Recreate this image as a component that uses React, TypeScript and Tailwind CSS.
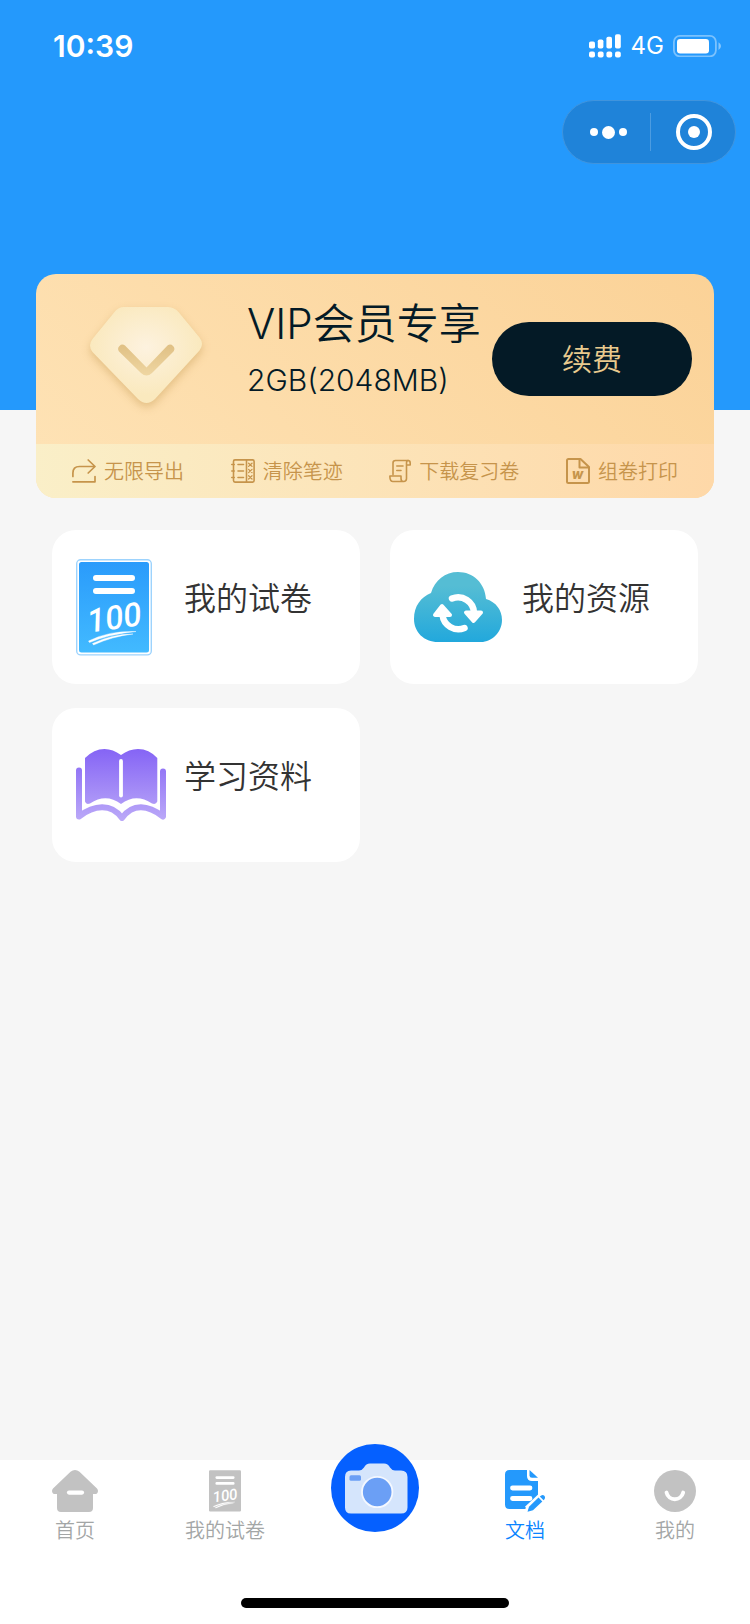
import React from 'react';

interface IconProps {
    className?: string;
}

interface PaperIconProps extends IconProps {
    plain?: boolean;
}

const SignalIcon = () => (
    <svg className="w-[33px] h-6" viewBox="0 0 33 24" fill="white" aria-hidden="true">
        <rect x="0" y="7.5" width="6" height="7" rx="1.8" />
        <rect x="8.8" y="5.5" width="5.6" height="9" rx="1.8" />
        <rect x="17.4" y="2.8" width="5.6" height="11.7" rx="1.8" />
        <rect x="26" y="0.3" width="5.8" height="14.2" rx="1.8" />
        <rect x="0" y="17.4" width="6" height="6" rx="2" />
        <rect x="8.8" y="17.4" width="5.8" height="6" rx="2" />
        <rect x="17.4" y="17.4" width="5.8" height="6" rx="2" />
        <rect x="26" y="17.4" width="5.8" height="6" rx="2" />
    </svg>
);

const BatteryIcon = () => (
    <svg className="w-12 h-[22px]" viewBox="0 0 48 22" aria-hidden="true">
        <rect x="0.9" y="0.9" width="42" height="20.4" rx="6" fill="none" stroke="white" strokeOpacity="0.4" strokeWidth="1.8" />
        <rect x="4" y="4" width="32" height="14.4" rx="3.2" fill="white" />
        <path d="M45.5 7.2q2.5 1.3 2.5 3.9t-2.5 3.9z" fill="white" fillOpacity="0.45" />
    </svg>
);

const DiamondIcon = () => (
    <svg className="w-28 h-[97px] overflow-visible drop-shadow-[0_4px_4px_rgba(190,145,70,0.4)]" viewBox="0 0 112 97" aria-hidden="true">
        <defs>
            <radialGradient id="gem" cx="0.5" cy="0.42" r="0.5">
                <stop offset="0" stopColor="#fdf2df" />
                <stop offset="1" stopColor="#fae9be" />
            </radialGradient>
            <linearGradient id="gemMark" x1="0" y1="0" x2="0" y2="1">
                <stop offset="0" stopColor="#e0c084" />
                <stop offset="1" stopColor="#efd6a2" />
            </linearGradient>
        </defs>
        <path
            d="M34 0H77Q84 0 88.500 5L109.500 30.500Q114.500 37 109.500 43.500L65 92Q56.500 100 48 92L2.500 45Q-2.500 38.500 2.500 32L24.500 5Q28.500 0 34 0Z"
            fill="url(#gem)"
        />
        <path d="M35 38.500L56.500 60.500L77.500 38.500A4.300 4.300 0 0 1 83.500 44.500L62 66Q56.500 71 51 66L29 44.500A4.300 4.300 0 0 1 35 38.500Z" fill="url(#gemMark)" />
    </svg>
);

const ExportIcon = () => (
    <svg className="w-6 h-6" viewBox="0 0 24 24" fill="none" stroke="#c6944b" strokeWidth="1.7" strokeLinecap="round" strokeLinejoin="round" aria-hidden="true">
        <path d="M0.900 17.500V14Q0.900 7.500 7.500 7.500H22.500M16.200 1L23 7.500L16.200 14M0.900 22.800H23V17.500" />
    </svg>
);

const NotebookIcon = () => (
    <svg className="w-6 h-6" viewBox="0 0 24 24" fill="none" stroke="#c6944b" strokeWidth="1.6" strokeLinecap="round" strokeLinejoin="round" aria-hidden="true">
        <rect x="2.500" y="0.900" width="20.600" height="22.200" rx="1.500" />
        <path d="M15.500 1V23M0.800 5.500H3.200M0.800 12H3.200M0.800 18.500H3.200M7 5.500H12.500M7 12H12.500M7 18.500H12.500" />
        <path d="M17.600 4.200L21 7.400M21 4.200L17.600 7.400M17.600 10.400L21 13.600M21 10.400L17.600 13.600M17.600 16.800L21 20M21 16.800L17.600 20" strokeWidth="1.300" />
    </svg>
);

const ScrollIcon = () => (
    <svg className="w-[22px] h-6" viewBox="0 0 22 24" fill="none" stroke="#c6944b" strokeWidth="1.6" strokeLinecap="round" strokeLinejoin="round" aria-hidden="true">
        <path d="M4 15.500V4Q4 1.500 6.500 1.500H19Q21.200 1.500 21.200 4V6H17.500V4Q17.500 1.500 19.300 1.500M17.500 6V19.500Q17.500 22.500 14.500 22.500H4Q1 22.500 0.900 18V17H12V19.500Q12 22.500 14.500 22.500M7.800 7H14M7.800 11.500H12" />
    </svg>
);

const WordIcon = () => (
    <svg className="w-6 h-[26px]" viewBox="0 0 24 26" fill="none" stroke="#c6944b" strokeWidth="2" strokeLinejoin="round" aria-hidden="true">
        <path d="M1 2.500Q1 1 2.500 1H14.500L23 9V23.500Q23 25 21.500 25H2.500Q1 25 1 23.500Z" />
        <path d="M13.500 1.500V9.500H22.500" />
        <text x="11.500" y="20.500" textAnchor="middle" fontFamily="Inter, sans-serif" fontSize="13" fontWeight="800" fontStyle="italic" fill="#c6944b" stroke="none">w</text>
    </svg>
);

const PaperIcon = ({ className, plain }: PaperIconProps) => (
    <svg className={className} viewBox={plain ? '3 3 70 91' : '0 0 76 97'} aria-hidden="true">
        <defs>
            <linearGradient id="paper" x1="0" y1="0" x2="0" y2="1">
                <stop offset="0" stopColor="#2a9bfb" />
                <stop offset="1" stopColor="#42baff" />
            </linearGradient>
        </defs>
        {!plain && <rect x="0.700" y="0.700" width="74.600" height="95.200" rx="4" fill="white" stroke="#9dd3fd" strokeWidth="1.400" />}
        <rect x="3" y="3" width="70" height="90.500" rx="2.500" fill={plain ? '#c2c2c2' : 'url(#paper)'} />
        <path d="M20 19H56M20 32H56" stroke="white" strokeWidth="6" strokeLinecap="round" />
        <text
            x="38"
            y="70"
            textAnchor="middle"
            transform="rotate(-8 38 58)"
            fontFamily="Roboto, sans-serif"
            fontSize="33"
            fontWeight="500"
            fontStyle="italic"
            fill="white"
        >
            100
        </text>
        <path d="M12.500 82Q33 71.500 60 72.500Q34 75 13.500 83.500ZM16.500 84.500Q36 75 57 75Q36 77.500 17.500 86Z" fill="white" stroke="white" strokeWidth="0.400" />
    </svg>
);

const CloudIcon = () => (
    <svg className="w-[88px] h-[70px]" viewBox="0 0 88 70" aria-hidden="true">
        <defs>
            <linearGradient id="cloud" x1="0" y1="0" x2="0" y2="1">
                <stop offset="0.200" stopColor="#55bdd4" />
                <stop offset="1" stopColor="#22a8dc" />
            </linearGradient>
        </defs>
        <path d="M24 70C10 70 0 60 0 47C0 34 7 25 17 21C21 8 31 0 44 0C59 0 71 11 72 27C82 30 88 38 88 48C88 60 78 70 67 70Z" fill="url(#cloud)" />
        <path d="M38 26.500A16 16 0 0 1 60 41M28.500 43A16 16 0 0 0 50.500 56" fill="none" stroke="white" strokeWidth="6.500" strokeLinecap="round" />
        <path d="M52 40.500H67L59.500 49ZM21 43H36L28 34Z" fill="white" stroke="white" strokeWidth="4" strokeLinejoin="round" />
    </svg>
);

const BookIcon = () => (
    <svg className="w-[90px] h-[72px]" viewBox="0 0 90 72" aria-hidden="true">
        <defs>
            <linearGradient id="book" gradientUnits="userSpaceOnUse" x1="0" y1="0" x2="0" y2="72">
                <stop offset="0" stopColor="#8564f5" />
                <stop offset="1" stopColor="#bba9f8" />
            </linearGradient>
        </defs>
        <path d="M9 9Q18 0 28.500 0Q37 0 45 6Q53 0 62 0Q73 0 81.300 9V52.500Q80 56 76 54.500Q60 44 45 55Q30 44 14 54.500Q10 56 9 52.500Z" fill="url(#book)" />
        <path d="M45 12V46.500" stroke="white" strokeWidth="3.800" strokeLinecap="round" />
        <path d="M3 21.500V67.500C18 56 35 54 46 69C57 54 72 56 87 67.500V22.500" fill="none" stroke="url(#book)" strokeWidth="6" strokeLinecap="round" strokeLinejoin="round" />
    </svg>
);

const HomeIcon = () => (
    <svg className="w-[46px] h-[42px]" viewBox="0 0 46 42" aria-hidden="true">
        <path d="M18.500 1.700Q23 -1.700 27.500 1.700L45 18.500Q47 21 45 23.500L44 24H41V38Q41 42 37 42H9Q5 42 5 38V24H2L1 23.500Q-1 21 1 18.500Z" fill="#c2c2c2" />
        <path d="M17 22.600H30" stroke="white" strokeWidth="4.200" strokeLinecap="round" />
    </svg>
);

const DocIcon = () => (
    <svg className="w-10 h-[42px]" viewBox="0 0 40 42" aria-hidden="true">
        <path d="M4.500 0H22V6Q22 11 27 11H33V26L20 39H4.500Q0 39 0 34.500V4.500Q0 0 4.500 0Z" fill="#2499fc" />
        <path d="M24.500 0L33 7.800H27Q24.500 7.800 24.500 5.500Z" fill="#2499fc" />
        <path d="M7.500 18H25M7.500 28.500H25" stroke="white" strokeWidth="4.800" strokeLinecap="round" />
        <path d="M23 40L37 27" stroke="white" strokeWidth="9" />
        <path d="M22.500 41.800L24 36.800L33.500 27.600L37.300 31.400L28 40.200Z" fill="#2499fc" />
        <path d="M34.800 26.500Q37.500 23.800 39.300 25.800Q41 27.800 38.600 30.200Z" fill="#2499fc" />
    </svg>
);

const SmileIcon = () => (
    <svg className="w-[42px] h-[42px]" viewBox="0 0 42 42" aria-hidden="true">
        <circle cx="21" cy="21" r="21" fill="#c2c2c2" />
        <path d="M12.500 22.500C14.500 31.500 27 31.500 29.200 22.500" fill="none" stroke="white" strokeWidth="3.800" strokeLinecap="round" />
    </svg>
);

const CameraIcon = () => (
    <svg className="w-[88px] h-[88px]" viewBox="0 0 88 88" aria-hidden="true">
        <circle cx="44" cy="44" r="44" fill="#0560ff" />
        <path
            d="M20 26.500H28Q31 26.500 33 23.500Q35 19.500 39 19.500H53Q57 19.500 59 23.500Q61 26.500 64 26.500H70Q76.500 26.500 76.500 33V63.500Q76.500 69.500 70 69.500H20Q14 69.500 14 63.500V33Q14 26.500 20 26.500Z"
            fill="#d5e5fc"
        />
        <rect x="18.500" y="31.300" width="11.500" height="5.500" rx="1.500" fill="#6b9ff5" />
        <circle cx="46.200" cy="48" r="15.200" fill="#6b9ff5" stroke="#f4f8ff" strokeWidth="1.800" />
    </svg>
);

const features = [
    { label: '无限导出', icon: <ExportIcon /> },
    { label: '清除笔迹', icon: <NotebookIcon /> },
    { label: '下载复习卷', icon: <ScrollIcon /> },
    { label: '组卷打印', icon: <WordIcon /> },
];

const entries = [
    { label: '我的试卷', icon: <PaperIcon className="w-[76px] h-[97px]" /> },
    { label: '我的资源', icon: <CloudIcon /> },
    { label: '学习资料', icon: <BookIcon /> },
];

const tabs = [
    { label: '首页', icon: <HomeIcon /> },
    { label: '我的试卷', icon: <PaperIcon plain className="w-8 h-[42px]" /> },
    { label: '', icon: <CameraIcon /> },
    { label: '文档', icon: <DocIcon />, active: true },
    { label: '我的', icon: <SmileIcon /> },
];

const Header = () => (
    <header className="bg-[#2499fc] h-[410px] text-white">
        <div className="flex items-center justify-between h-[92px] pl-[53px] pr-[29px]">
            <span className="text-[30px] leading-8 font-semibold">10:39</span>
            <div className="flex items-center gap-[9px]">
                <SignalIcon />
                <span className="text-2xl leading-8">4G</span>
                <BatteryIcon />
            </div>
        </div>
        <div className="flex justify-end pt-2 pr-[14px]">
            <div className="flex items-center w-[174px] h-16 rounded-full bg-[#1f83d9] border border-[#4094dd]">
                <button type="button" aria-label="更多" className="flex-1 pl-1 flex items-center justify-center gap-1">
                    <span className="w-2 h-2 rounded-full bg-white" />
                    <span className="w-[13px] h-[13px] rounded-full bg-white" />
                    <span className="w-2 h-2 rounded-full bg-white" />
                </button>
                <span className="w-px h-[38px] bg-[#4c9ce1]" />
                <button type="button" aria-label="关闭" className="flex-1 pl-0.5 flex items-center justify-center">
                    <span className="flex items-center justify-center w-9 h-9 rounded-full border-4 border-white">
                        <span className="w-3 h-3 rounded-full bg-white" />
                    </span>
                </button>
            </div>
        </div>
    </header>
);

const VipCard = () => (
    <section className="relative -mt-[136px] mx-9 rounded-[20px] overflow-hidden bg-linear-45 from-[#fee3b6] to-[#fbd297]">
        <div className="flex items-center h-[170px] pl-[54px] pr-[22px]">
            <div className="pb-2 shrink-0">
                <DiamondIcon />
            </div>
            <div className="pl-[45px] pb-[14px] flex-1 min-w-0 text-[#041a26] whitespace-nowrap">
                <h1 className="text-[42px] leading-[56px] font-[350]">VIP会员专享</h1>
                <p className="text-[30px] leading-[56px] font-[350]">2GB(2048MB)</p>
            </div>
            <button type="button" className="shrink-0 w-[200px] h-[74px] rounded-full bg-[#041a26] text-[#e9ca8e] text-[30px] font-[350]">
                续费
            </button>
        </div>
        <ul className="flex items-center justify-between h-[54px] px-9 bg-linear-to-r from-[#faefc8] to-[#fed8a8] text-[#c6944b] text-xl">
            {features.map((item) => (
                <li key={item.label} className="flex items-center gap-2 whitespace-nowrap font-[350]">
                    {item.icon}
                    <span className="pt-0.5">{item.label}</span>
                </li>
            ))}
        </ul>
    </section>
);

const EntryGrid = () => (
    <section className="grid grid-cols-2 gap-x-[30px] gap-y-6 px-[52px] pt-8">
        {entries.map((item) => (
            <a key={item.label} href="#" className="flex items-center h-[154px] pl-6 bg-white rounded-3xl text-[#333333]">
                <span className="w-[108px] shrink-0">{item.icon}</span>
                <span className="pb-4 text-[32px] leading-10 font-[350]">{item.label}</span>
            </a>
        ))}
    </section>
);

const TabBar = () => (
    <nav className="mt-auto bg-white h-[164px] flex flex-col justify-between items-center pb-4">
        <div className="grid grid-cols-5 w-full">
            {tabs.map((tab, index) =>
                tab.label ? (
                    <a
                        key={index}
                        href="#"
                        className={`flex flex-col items-center gap-1 pt-[10px] text-xl leading-[30px] font-[350] ${tab.active ? 'text-[#0a84ff]' : 'text-[#a3a6a6]'}`}
                    >
                        {tab.icon}
                        <span>{tab.label}</span>
                    </a>
                ) : (
                    <button key={index} type="button" aria-label="拍照" className="-mt-4 flex justify-center items-start">
                        {tab.icon}
                    </button>
                )
            )}
        </div>
        <div className="w-[268px] h-[10px] rounded-full bg-black" />
    </nav>
);

const App = () => {
    return (
        <div className="min-h-screen flex flex-col bg-[#f6f6f6] font-[Inter,'Noto_Sans_CJK_SC',sans-serif]">
            <Header />
            <main>
                <VipCard />
                <EntryGrid />
            </main>
            <TabBar />
        </div>
    );
};

export default App;
